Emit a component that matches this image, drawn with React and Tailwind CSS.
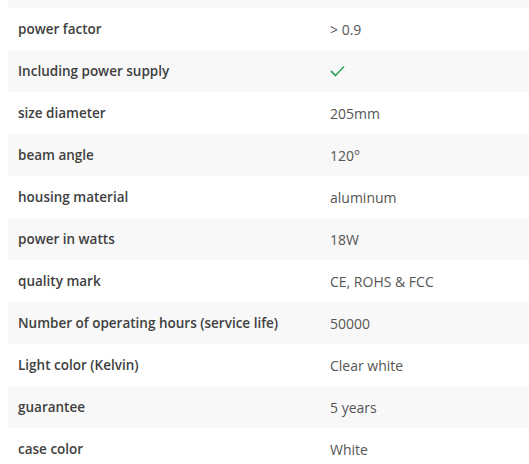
const rows = [
  ['power factor', '> 0.9'],
  ['Including power supply', 'check'],
  ['size diameter', '205mm'],
  ['beam angle', '120°'],
  ['housing material', 'aluminum'],
  ['power in watts', '18W'],
  ['quality mark', 'CE, ROHS & FCC'],
  ['Number of operating hours (service life)', '50000'],
  ['Light color (Kelvin)', 'Clear white'],
  ['guarantee', '5 years'],
  ['case color', 'White'],
];

function Check() {
  return (
    <svg width="15" height="12" viewBox="0 0 15 12" fill="none" className="block">
      <path d="M1.5 6.5l4 4L13.5 2" stroke="#3aa96b" strokeWidth="1.8" strokeLinecap="round" strokeLinejoin="round" />
    </svg>
  );
}

export default function App() {
  return (
    <div className="w-[529px] h-[464px] overflow-hidden bg-white font-['Open_Sans',sans-serif]">
      <div className="-mt-[34px] pl-2">
        <div className="h-[42px] bg-[#f8f8f8]" />
        {rows.map(([label, value], i) => (
          <div
            key={label}
            className={`flex h-[42px] items-center ${i % 2 === 1 ? 'bg-[#f8f8f8]' : 'bg-white'}`}
          >
            <div className="w-[312px] pl-[10px] text-[13.5px] font-semibold text-[#404040]">{label}</div>
            <div className="pl-[10px] text-[14px] text-[#555]">
              {value === 'check' ? <Check /> : value}
            </div>
          </div>
        ))}
      </div>
    </div>
  );
}
